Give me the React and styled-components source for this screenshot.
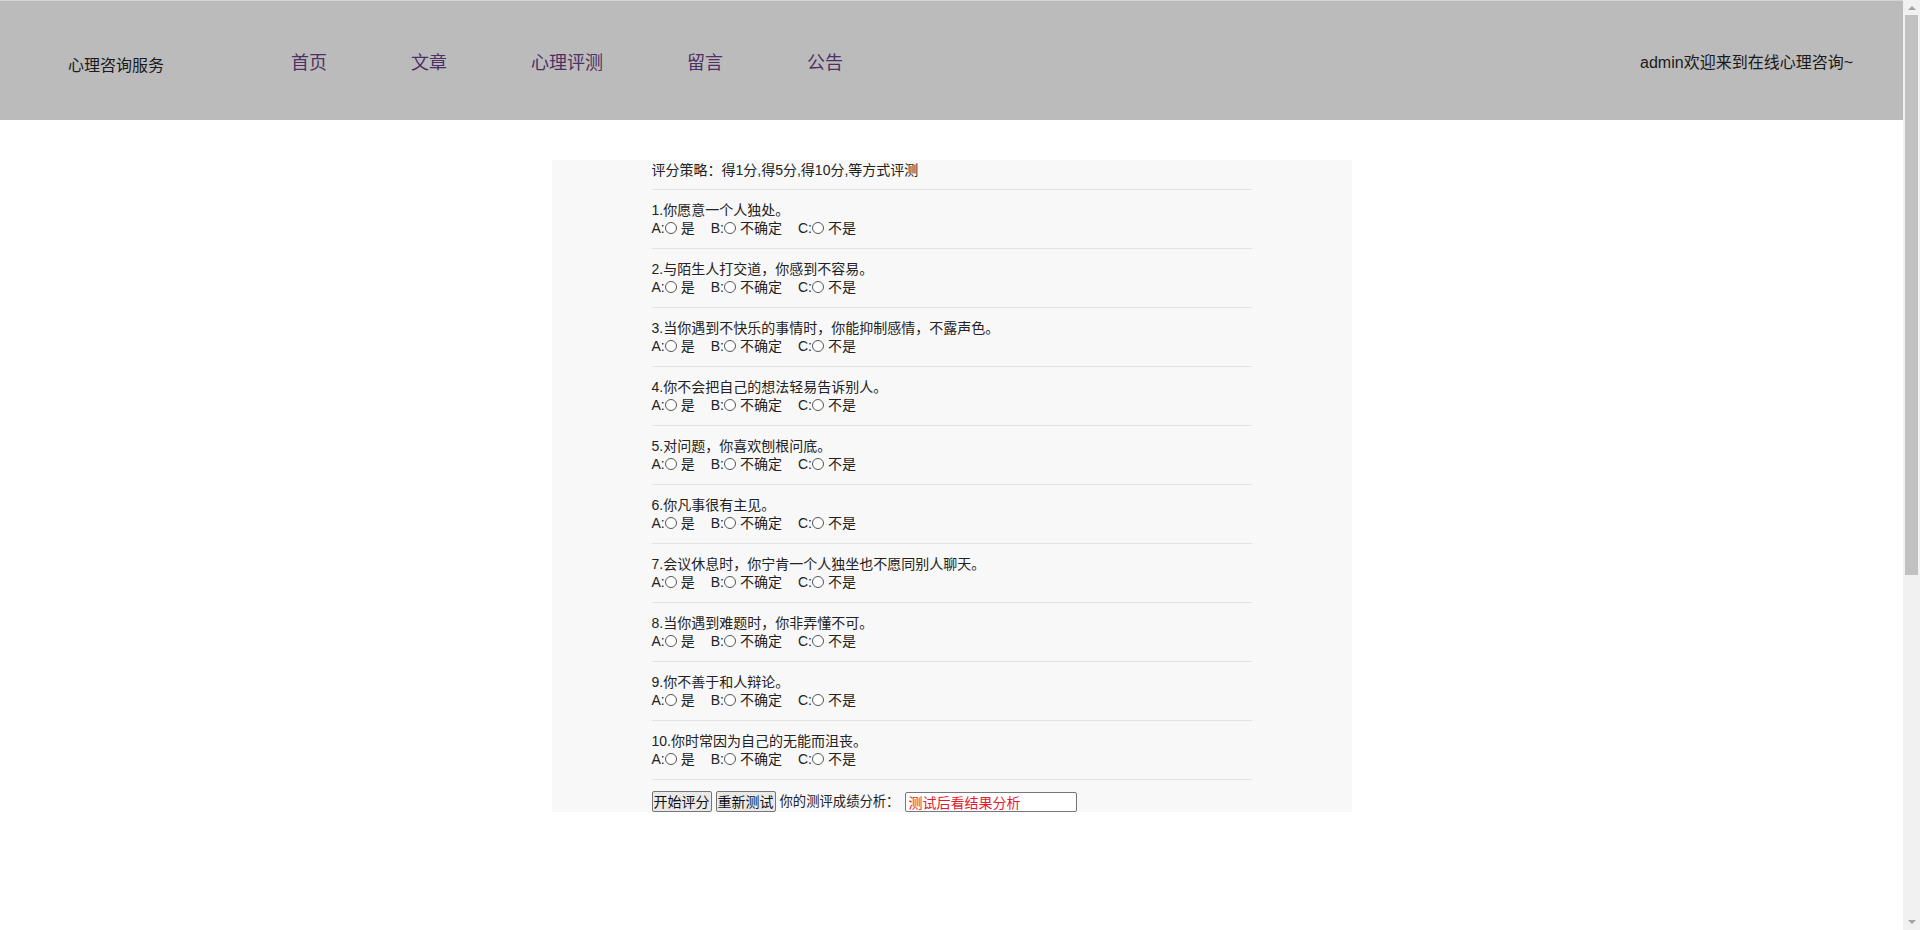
import styled, { createGlobalStyle } from "styled-components";

const GlobalStyle = createGlobalStyle`
  html, body {
    margin: 0;
    padding: 0;
    background: #fff;
  }
  body {
    font-family: "Liberation Sans", Arial, "Noto Sans CJK SC", sans-serif;
    color: #222;
  }
`;

const questions = [
  "你愿意一个人独处。",
  "与陌生人打交道，你感到不容易。",
  "当你遇到不快乐的事情时，你能抑制感情，不露声色。",
  "你不会把自己的想法轻易告诉别人。",
  "对问题，你喜欢刨根问底。",
  "你凡事很有主见。",
  "会议休息时，你宁肯一个人独坐也不愿同别人聊天。",
  "当你遇到难题时，你非弄懂不可。",
  "你不善于和人辩论。",
  "你时常因为自己的无能而沮丧。",
];

const choices = [
  { key: "A", text: "是" },
  { key: "B", text: "不确定" },
  { key: "C", text: "不是" },
];

const navItems = ["首页", "文章", "心理评测", "留言", "公告"];

// page width leaves room for the scroll bar on the right
const Page = styled.div`
  width: calc(100% - 17px);
  min-height: 1495px;
`;

const ScrollTrack = styled.div`
  position: fixed;
  top: 0;
  right: 0;
  width: 17px;
  height: 100vh;
  background: #f1f1f1;
  display: flex;
  flex-direction: column;
  align-items: center;
`;

const ScrollArrow = styled.div`
  width: 0;
  height: 0;
  margin: ${({ $down }) => ($down ? "auto 0 6px" : "6px 0 0")};
  border-left: 4px solid transparent;
  border-right: 4px solid transparent;
  ${({ $down }) =>
    $down ? "border-top: 4px solid #a3a3a3;" : "border-bottom: 4px solid #a3a3a3;"}
`;

const ScrollThumb = styled.div`
  width: 13px;
  height: 560px;
  margin-top: 5px;
  background: #c1c1c1;
`;

const Header = styled.header`
  box-sizing: border-box;
  height: 120px;
  border-top: 1px solid #d4d4d4;
  background: #bbbbbb;
  display: flex;
  align-items: center;
  padding: 0 50px 0 68px;
`;

const Brand = styled.div`
  font-family: "Noto Sans CJK SC", sans-serif;
  font-size: 16px;
  color: #1a1a1a;
  margin-top: 6px;
`;

const Nav = styled.nav`
  display: flex;
  margin-left: 85px;
  flex: 1;
`;

const NavLink = styled.a`
  font-family: "Noto Sans CJK SC", sans-serif;
  font-size: 18px;
  color: #4d3065;
  text-decoration: none;
  padding: 0 42px;
  cursor: pointer;
`;

const Welcome = styled.div`
  font-family: "Liberation Sans", Arial, "Noto Sans CJK SC", sans-serif;
  font-size: 16px;
  color: #1a1a1a;
`;

const Panel = styled.section`
  width: 800px;
  margin: 40px auto 0;
  background: #f8f8f8;
`;

const Inner = styled.div`
  width: 600px;
  margin: 0 auto;
  font-size: 14px;
  line-height: 18px;
`;

const Strategy = styled.div`
  padding: 1px 0 10px;
`;

const Rule = styled.hr`
  margin: 0;
  border: none;
  border-top: 1px solid #e2e2e2;
`;

const Question = styled.div`
  padding: 11px 0;
`;

const Options = styled.div`
  display: flex;
  align-items: center;
  height: 18px;
`;

const Choice = styled.label`
  display: inline-flex;
  align-items: center;
  margin-right: 16px;
  cursor: pointer;
`;

const Radio = styled.input.attrs({ type: "radio" })`
  appearance: none;
  width: 12px;
  height: 12px;
  margin: 0 4px 0 0;
  border: 1px solid #555;
  border-radius: 50%;
  background: #fff;
  box-sizing: border-box;
  cursor: pointer;

  &:checked {
    background: radial-gradient(circle, #333 0 3px, #fff 3.5px);
  }
`;

const Actions = styled.div`
  display: flex;
  align-items: center;
  height: 21px;
  padding-top: 11px;
  gap: 4px;
`;

const Button = styled.button`
  font-family: "Noto Sans CJK SC", sans-serif;
  font-size: 14px;
  line-height: 17px;
  height: 21px;
  padding: 0 1px;
  border: 1px solid #767676;
  border-radius: 2px;
  background: #e9e9e9;
  color: #111;
  cursor: pointer;
`;

const ResultLabel = styled.span`
  font-size: 13.33px;
`;

const ResultInput = styled.input`
  box-sizing: border-box;
  width: 172px;
  height: 20px;
  margin-left: 2px;
  padding: 0 2px;
  border: 1px solid #767676;
  border-radius: 2px;
  background: #fff;
  font-family: "Noto Sans CJK SC", sans-serif;
  font-size: 14px;
  color: #e8192c;
  outline: none;
`;

export default function App() {
  return (
    <Page>
      <GlobalStyle />
      <Header>
        <Brand>心理咨询服务</Brand>
        <Nav>
          {navItems.map((item) => (
            <NavLink key={item}>{item}</NavLink>
          ))}
        </Nav>
        <Welcome>admin欢迎来到在线心理咨询~</Welcome>
      </Header>
      <Panel>
        <Inner>
          <Strategy>评分策略：得1分,得5分,得10分,等方式评测</Strategy>
          {questions.map((q, i) => (
            <div key={i}>
              <Rule />
              <Question>
                <div>
                  {i + 1}.{q}
                </div>
                <Options>
                  {choices.map((c) => (
                    <Choice key={c.key}>
                      {c.key}:<Radio name={`q${i}`} value={c.key} />
                      {c.text}
                    </Choice>
                  ))}
                </Options>
              </Question>
            </div>
          ))}
          <Rule />
          <Actions>
            <Button type="button">开始评分</Button>
            <Button type="button">重新测试</Button>
            <ResultLabel>你的测评成绩分析：</ResultLabel>
            <ResultInput readOnly defaultValue="测试后看结果分析" />
          </Actions>
        </Inner>
      </Panel>
      <ScrollTrack>
        <ScrollArrow />
        <ScrollThumb />
        <ScrollArrow $down />
      </ScrollTrack>
    </Page>
  );
}
